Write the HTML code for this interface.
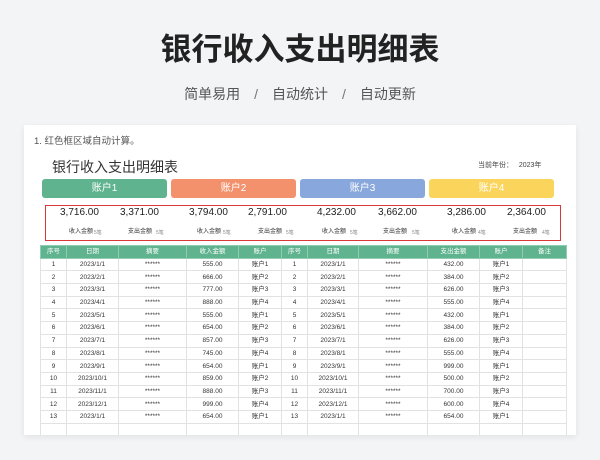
<!DOCTYPE html>
<html><head><meta charset="utf-8"><style>
*{margin:0;padding:0;box-sizing:border-box}
body{width:600px;height:460px;background:#f3f4f6;font-family:"Liberation Sans","Noto Sans CJK SC",sans-serif;position:relative;overflow:hidden;color:#333}
.h1{position:absolute;top:24px;left:0;width:600px;text-align:center;font-size:31px;font-weight:bold;color:#222;letter-spacing:0px}
.sub{position:absolute;top:84px;left:0;width:600px;text-align:center;font-size:14px;color:#555;word-spacing:0}
.sub span{margin:0 14px;color:#777}
.card{position:absolute;left:24px;top:125px;width:552px;height:310px;background:#fff;box-shadow:0 2px 6px rgba(0,0,0,.08);overflow:hidden}
.note{position:absolute;left:10px;top:8px;font-size:9.5px;color:#555}
.t2{position:absolute;left:28px;top:32px;font-size:14px;color:#333}
.yr{position:absolute;left:454px;top:35px;font-size:7px;color:#444}
.tab{position:absolute;top:54px;height:19px;width:125px;border-radius:3px;color:#fff;font-size:10px;text-align:center;line-height:19px}
.red{position:absolute;left:21px;top:80px;width:516px;height:36px;border:1.3px solid #d9383a}
.n{position:absolute;top:82px;font-size:10px;color:#222}
.l{position:absolute;top:101px;font-size:6px;color:#333}
.c{position:absolute;top:104px;font-size:5px;color:#888}
table{position:absolute;left:16px;top:120px;border-collapse:collapse;table-layout:fixed;width:526px}
td,th{height:12.7px;font-size:6.5px;text-align:center;border:1px solid #e2e2e2;font-weight:normal;padding:0;line-height:11px;color:#333}
th{background:#5fb38e;color:#fff;border-color:#8fcdb1}
</style></head><body>
<div class="h1">银行收入支出明细表</div>
<div class="sub">简单易用<span>/</span>自动统计<span>/</span>自动更新</div>
<div class="card">
<div class="note">1. 红色框区域自动计算。</div>
<div class="t2">银行收入支出明细表</div>
<div class="yr">当前年份：&nbsp;&nbsp; 2023年</div>
<div class="tab" style="left:18px;background:#5fb38e">账户1</div>
<div class="tab" style="left:147px;background:#f3916c">账户2</div>
<div class="tab" style="left:276px;background:#88a7dc">账户3</div>
<div class="tab" style="left:405px;background:#fbd55b">账户4</div>
<div class="red"></div>
<div class="n" style="left:36px">3,716.00</div><div class="n" style="left:96px">3,371.00</div>
<div class="n" style="left:165px">3,794.00</div><div class="n" style="left:224px">2,791.00</div>
<div class="n" style="left:293px">4,232.00</div><div class="n" style="left:354px">3,662.00</div>
<div class="n" style="left:423px">3,286.00</div><div class="n" style="left:483px">2,364.00</div>
<div class="l" style="left:45px">收入金额</div><div class="c" style="left:70px">5笔</div>
<div class="l" style="left:104px">支出金额</div><div class="c" style="left:132px">5笔</div>
<div class="l" style="left:173px">收入金额</div><div class="c" style="left:199px">5笔</div>
<div class="l" style="left:234px">支出金额</div><div class="c" style="left:262px">5笔</div>
<div class="l" style="left:298px">收入金额</div><div class="c" style="left:326px">5笔</div>
<div class="l" style="left:359px">支出金额</div><div class="c" style="left:388px">5笔</div>
<div class="l" style="left:428px">收入金额</div><div class="c" style="left:454px">4笔</div>
<div class="l" style="left:489px">支出金额</div><div class="c" style="left:518px">4笔</div>
<table>
<colgroup><col style="width:26px"><col style="width:52px"><col style="width:68px"><col style="width:52px"><col style="width:43px"><col style="width:26px"><col style="width:51px"><col style="width:69px"><col style="width:52px"><col style="width:43px"><col style="width:44px"></colgroup>
<tr><th>序号</th><th>日期</th><th>摘要</th><th>收入金额</th><th>账户</th><th>序号</th><th>日期</th><th>摘要</th><th>支出金额</th><th>账户</th><th>备注</th></tr>
<tr><td>1</td><td>2023/1/1</td><td>******</td><td>555.00</td><td>账户1</td><td>1</td><td>2023/1/1</td><td>******</td><td>432.00</td><td>账户1</td><td></td></tr>
<tr><td>2</td><td>2023/2/1</td><td>******</td><td>666.00</td><td>账户2</td><td>2</td><td>2023/2/1</td><td>******</td><td>384.00</td><td>账户2</td><td></td></tr>
<tr><td>3</td><td>2023/3/1</td><td>******</td><td>777.00</td><td>账户3</td><td>3</td><td>2023/3/1</td><td>******</td><td>626.00</td><td>账户3</td><td></td></tr>
<tr><td>4</td><td>2023/4/1</td><td>******</td><td>888.00</td><td>账户4</td><td>4</td><td>2023/4/1</td><td>******</td><td>555.00</td><td>账户4</td><td></td></tr>
<tr><td>5</td><td>2023/5/1</td><td>******</td><td>555.00</td><td>账户1</td><td>5</td><td>2023/5/1</td><td>******</td><td>432.00</td><td>账户1</td><td></td></tr>
<tr><td>6</td><td>2023/6/1</td><td>******</td><td>654.00</td><td>账户2</td><td>6</td><td>2023/6/1</td><td>******</td><td>384.00</td><td>账户2</td><td></td></tr>
<tr><td>7</td><td>2023/7/1</td><td>******</td><td>857.00</td><td>账户3</td><td>7</td><td>2023/7/1</td><td>******</td><td>626.00</td><td>账户3</td><td></td></tr>
<tr><td>8</td><td>2023/8/1</td><td>******</td><td>745.00</td><td>账户4</td><td>8</td><td>2023/8/1</td><td>******</td><td>555.00</td><td>账户4</td><td></td></tr>
<tr><td>9</td><td>2023/9/1</td><td>******</td><td>654.00</td><td>账户1</td><td>9</td><td>2023/9/1</td><td>******</td><td>999.00</td><td>账户1</td><td></td></tr>
<tr><td>10</td><td>2023/10/1</td><td>******</td><td>859.00</td><td>账户2</td><td>10</td><td>2023/10/1</td><td>******</td><td>500.00</td><td>账户2</td><td></td></tr>
<tr><td>11</td><td>2023/11/1</td><td>******</td><td>888.00</td><td>账户3</td><td>11</td><td>2023/11/1</td><td>******</td><td>700.00</td><td>账户3</td><td></td></tr>
<tr><td>12</td><td>2023/12/1</td><td>******</td><td>999.00</td><td>账户4</td><td>12</td><td>2023/12/1</td><td>******</td><td>600.00</td><td>账户4</td><td></td></tr>
<tr><td>13</td><td>2023/1/1</td><td>******</td><td>654.00</td><td>账户1</td><td>13</td><td>2023/1/1</td><td>******</td><td>654.00</td><td>账户1</td><td></td></tr>
<tr><td></td><td></td><td></td><td></td><td></td><td></td><td></td><td></td><td></td><td></td><td></td></tr>
</table>
</div>
</body></html>
